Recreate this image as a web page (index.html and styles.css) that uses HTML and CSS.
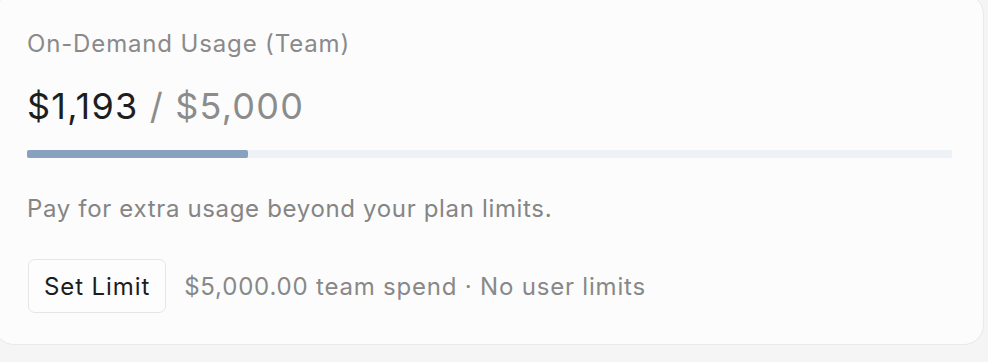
FILE: index.html
```html
<!DOCTYPE html>
<html lang="en">
<head>
<meta charset="utf-8">
<title>On-Demand Usage</title>
<link rel="stylesheet" href="styles.css">
</head>
<body>
  <section class="card">
    <div class="title">On-Demand Usage (Team)</div>
    <div class="amount"><span class="used">$1,193</span> <span class="limit">/ $5,000</span></div>
    <div class="track"><div class="fill" style="width: 23.86%"></div></div>
    <p class="desc">Pay for extra usage beyond your plan limits.</p>
    <div class="actions">
      <button class="btn" type="button">Set Limit</button>
      <span class="meta">$5,000.00 team spend · No user limits</span>
    </div>
  </section>
</body>
</html>
```

FILE: styles.css
```css
html, body {
  margin: 0;
  padding: 0;
  background: #f5f5f5;
  font-family: Inter, "Noto Sans", sans-serif;
}

body {
  width: 988px;
  height: 362px;
  overflow: hidden;
}

.card {
  box-sizing: border-box;
  margin: -6px 0 0 -6px;
  width: 990px;
  height: 351px;
  padding: 32px 31px 0 32px;
  background: #fcfcfc;
  border: 1px solid #e9e9e9;
  border-radius: 20px;
}

.title {
  margin-top: 1px;
  font-size: 24px;
  line-height: 32px;
  letter-spacing: 0.85px;
  color: #8a8a8a;
}

.amount {
  margin-top: 24px;
  font-size: 36px;
  line-height: 44px;
  letter-spacing: 1.2px;
}

.used { color: #1e1e1e; }
.limit { color: #8c8c8c; }

.track {
  margin-top: 22px;
  height: 8px;
  background: #eef2f6;
  border-radius: 1px;
}

.fill {
  height: 100%;
  background: #87a1bf;
  border-radius: 2px;
}

.desc {
  margin: 35px 0 0;
  font-size: 24px;
  line-height: 32px;
  letter-spacing: 0.66px;
  color: #858585;
}

.actions {
  margin-top: 34px;
  padding-left: 1px;
  display: flex;
  align-items: center;
  gap: 18px;
}

.btn {
  box-sizing: border-box;
  height: 54px;
  padding: 0 15px;
  background: #fdfdfd;
  border: 1px solid #e6e6e6;
  border-radius: 7px;
  font-family: inherit;
  font-size: 24px;
  letter-spacing: 0.9px;
  color: #1c1c1c;
}

.meta {
  font-size: 24px;
  letter-spacing: 0.8px;
  color: #888888;
}
```
